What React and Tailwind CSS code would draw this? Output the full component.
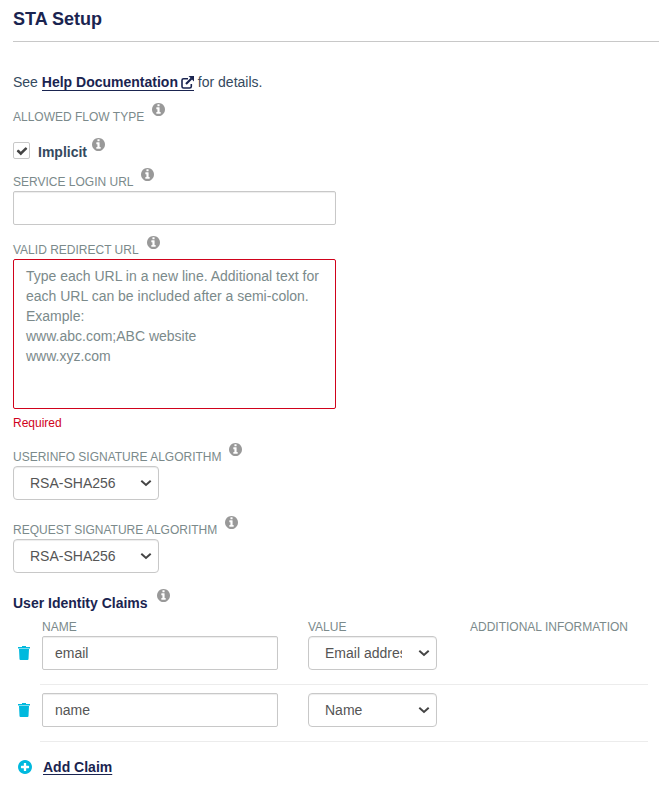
import React, { useState } from "react";

const fieldClass =
  "block h-[34px] w-full rounded-xs border border-[#c8c8c8] bg-white px-3 text-sm text-[#555] shadow-[inset_0_1px_1px_rgba(0,0,0,0.075)] outline-none";
const labelClass = "text-xs leading-4 text-[#7b8a8b] uppercase";

const algorithms = ["RSA-SHA256", "RSA-SHA384", "RSA-SHA512"];
const claimValues = ["Email address", "Name", "Username"];

const InfoIcon = () => (
  <svg
    viewBox="128 128 1536 1536"
    className="mb-[9px] size-[13px] shrink-0 text-[#999]"
    fill="currentColor"
    aria-hidden="true"
  >
    <path d="M1152 1376v-160q0-14-9-23t-23-9h-96v-512q0-14-9-23t-23-9h-320q-14 0-23 9t-9 23v160q0 14 9 23t23 9h96v320h-96q-14 0-23 9t-9 23v160q0 14 9 23t23 9h448q14 0 23-9t9-23zm-128-896v-160q0-14-9-23t-23-9h-192q-14 0-23 9t-9 23v160q0 14 9 23t23 9h192q14 0 23-9t9-23zm640 416q0 209-103 385.5t-279.5 279.5-385.5 103-385.5-103-279.5-279.5-103-385.5 103-385.5 279.5-279.5 385.5-103 385.5 103 279.5 279.5 103 385.5z" />
  </svg>
);

const ExternalLinkIcon = () => (
  <svg
    viewBox="0 0 13 13"
    className="size-[13px]"
    fill="none"
    stroke="currentColor"
    aria-hidden="true"
  >
    <path
      d="M7 2.7H2.6Q1 2.7 1 4.3v6.1Q1 12 2.6 12h6.1q1.6 0 1.6-1.6V8"
      strokeWidth="1.6"
    />
    <path d="M5 8 10.5 2.5" strokeWidth="2.2" />
    <path d="M7.5 0H13v5.5z" fill="currentColor" stroke="none" />
  </svg>
);

const CheckIcon = () => (
  <svg
    viewBox="0 0 1792 1792"
    className="pointer-events-none col-start-1 row-start-1 size-3 text-[#444]"
    fill="currentColor"
    aria-hidden="true"
  >
    <path d="M1671 566q0 40-28 68l-724 724-136 136q-28 28-68 28t-68-28l-136-136-362-362q-28-28-28-68t28-68l136-136q28-28 68-28t68 28l294 295 656-657q28-28 68-28t68 28l136 136q28 28 28 68z" />
  </svg>
);

const ChevronIcon = () => (
  <svg
    viewBox="0 0 12 8"
    className="pointer-events-none col-start-1 row-start-1 mr-[7px] h-2 w-3 justify-self-end text-[#444]"
    fill="none"
    stroke="currentColor"
    strokeWidth="2"
    aria-hidden="true"
  >
    <path d="M1.3 1.8 6 6l4.7-4.2" />
  </svg>
);

const TrashIcon = () => (
  <svg
    viewBox="0 0 12 14"
    className="h-[14px] w-3"
    fill="currentColor"
    aria-hidden="true"
  >
    <path d="M4 0h4v1h4v1H0V1h4z" />
    <path d="M0 2h12v1H0z" opacity="0.5" />
    <path d="M1 3h10l-.5 10q0 1-1 1h-7q-1 0-1-1z" />
  </svg>
);

const PlusIcon = () => (
  <svg
    viewBox="128 128 1536 1536"
    className="size-[14px] text-[#00b9de]"
    fill="currentColor"
    aria-hidden="true"
  >
    <path d="M1344 960v-128q0-26-19-45t-45-19h-256v-256q0-26-19-45t-45-19h-128q-26 0-45 19t-19 45v256h-256q-26 0-45 19t-19 45v128q0 26 19 45t45 19h256v256q0 26 19 45t45 19h128q26 0 45-19t19-45v-256h256q26 0 45-19t19-45zm320-64q0 209-103 385.5t-279.5 279.5-385.5 103-385.5-103-279.5-279.5-103-385.5 103-385.5 279.5-279.5 385.5-103 385.5 103 279.5 279.5 103 385.5z" />
  </svg>
);

const FieldLabel = ({ htmlFor, children }) => (
  <div className="flex items-end gap-2">
    <label htmlFor={htmlFor} className={labelClass}>
      {children}
    </label>
    <InfoIcon />
  </div>
);

const Select = ({ options, className, ...props }) => (
  <div className={`grid items-center ${className}`}>
    <select
      {...props}
      className="col-start-1 row-start-1 block h-[34px] w-full appearance-none rounded border border-[#c8c8c8] bg-white pr-[34px] pl-4 text-sm text-[#555] shadow-[inset_0_1px_1px_rgba(0,0,0,0.075)] outline-none"
    >
      {options.map((option) => (
        <option key={option}>{option}</option>
      ))}
    </select>
    <ChevronIcon />
  </div>
);

const AlgorithmSelect = ({ id, label }) => (
  <div>
    <FieldLabel htmlFor={id}>{label}</FieldLabel>
    <Select id={id} options={algorithms} className="mt-px w-[146px]" />
  </div>
);

const App = () => {
  const [implicit, setImplicit] = useState(true);
  const [claims, setClaims] = useState([
    { id: 1, name: "email", value: "Email address" },
    { id: 2, name: "name", value: "Name" },
  ]);

  const updateClaim = (id, changes) => {
    setClaims((prev) =>
      prev.map((claim) => (claim.id === id ? { ...claim, ...changes } : claim)),
    );
  };

  const removeClaim = (id) => {
    setClaims((prev) => prev.filter((claim) => claim.id !== id));
  };

  const addClaim = () => {
    setClaims((prev) => [...prev, { id: Date.now(), name: "", value: "Name" }]);
  };

  return (
    <main className="bg-white pt-[9px] pb-2 pl-[13px] font-['Liberation_Sans',Arial,sans-serif] text-sm text-[#34495e]">
      <h1 className="border-b border-[#c8c8c8] pb-3 text-lg leading-5 font-bold text-[#1a2450]">
        STA Setup
      </h1>

      <p className="mt-[30px] leading-5">
        See{" "}
        <a
          href="#help"
          className="inline-flex items-center gap-[3px] border-b border-[#1a2450] leading-4 font-bold text-[#1a2450]"
        >
          Help Documentation
          <ExternalLinkIcon />
        </a>{" "}
        for details.
      </p>

      <div className="mt-[11px] flex items-end gap-2">
        <span className={labelClass}>Allowed flow type</span>
        <InfoIcon />
      </div>

      <div className="mt-[13px] flex items-end">
        <span className="mb-px grid place-items-center">
          <input
            id="implicit"
            type="checkbox"
            checked={implicit}
            onChange={(event) => setImplicit(event.target.checked)}
            className="col-start-1 row-start-1 size-[17px] appearance-none rounded-xs border border-[#c8c8c8] bg-white"
          />
          {implicit && <CheckIcon />}
        </span>
        <label htmlFor="implicit" className="mr-[5px] ml-2 leading-4 font-bold">
          Implicit
        </label>
        <InfoIcon />
      </div>

      <div className="mt-2">
        <FieldLabel htmlFor="login-url">Service login URL</FieldLabel>
        <input
          id="login-url"
          type="text"
          className={`${fieldClass} mt-px max-w-[323px]`}
        />
      </div>

      <div className="mt-[11px]">
        <FieldLabel htmlFor="redirect-url">Valid redirect URL</FieldLabel>
        <textarea
          id="redirect-url"
          placeholder={
            "Type each URL in a new line. Additional text for each URL can be included after a semi-colon.\nExample:\nwww.abc.com;ABC website\nwww.xyz.com"
          }
          className="mt-px block h-[150px] w-full max-w-[323px] resize-none rounded-xs border border-[#d0021b] px-3 py-[6px] text-sm leading-5 outline-none placeholder:text-[#7b8a8b]"
        />
        <p className="mt-[6px] text-xs leading-4 text-[#d0021b]">Required</p>
      </div>

      <div className="mt-3 flex flex-col gap-4">
        <AlgorithmSelect
          id="userinfo-algorithm"
          label="Userinfo signature algorithm"
        />
        <AlgorithmSelect
          id="request-algorithm"
          label="Request signature algorithm"
        />
      </div>

      <div className="mt-4 flex items-end gap-[9px]">
        <h2 className="leading-4 font-bold text-[#1a2450]">
          User Identity Claims
        </h2>
        <InfoIcon />
      </div>

      <table className="mt-2 w-[calc(100%-11px)] table-fixed border-collapse text-left">
        <thead>
          <tr className={labelClass}>
            <th className="w-[27px]" aria-label="Remove" />
            <th className="w-[268px] pl-[2px] font-normal">Name</th>
            <th className="w-[160px] font-normal">Value</th>
            <th className="pl-[2px] font-normal">Additional information</th>
          </tr>
        </thead>
        <tbody>
          {claims.map((claim, index) => {
            const cellClass = index === 0 ? "pt-px pb-[14px]" : "pt-2 pb-[14px]";
            return (
              <tr key={claim.id}>
                <td className={`${cellClass} pl-[5px]`}>
                  <button
                    type="button"
                    aria-label={`Remove ${claim.name}`}
                    onClick={() => removeClaim(claim.id)}
                    className="block text-[#00b9de]"
                  >
                    <TrashIcon />
                  </button>
                </td>
                <td className={`${cellClass} border-b border-[#ececec] pl-[2px]`}>
                  <input
                    type="text"
                    aria-label="Name"
                    value={claim.name}
                    onChange={(event) =>
                      updateClaim(claim.id, { name: event.target.value })
                    }
                    className={`${fieldClass} max-w-[236px]`}
                  />
                </td>
                <td className={`${cellClass} border-b border-[#ececec]`}>
                  <Select
                    aria-label="Value"
                    value={claim.value}
                    onChange={(event) =>
                      updateClaim(claim.id, { value: event.target.value })
                    }
                    options={claimValues}
                    className="w-[129px]"
                  />
                </td>
                <td className="border-b border-[#ececec]" />
              </tr>
            );
          })}
        </tbody>
      </table>

      <button
        type="button"
        onClick={addClaim}
        className="mt-[15px] ml-[5px] flex items-center gap-[11px] font-bold text-[#1a2450]"
      >
        <PlusIcon />
        <span className="underline underline-offset-2">Add Claim</span>
      </button>
    </main>
  );
};

export default App;
